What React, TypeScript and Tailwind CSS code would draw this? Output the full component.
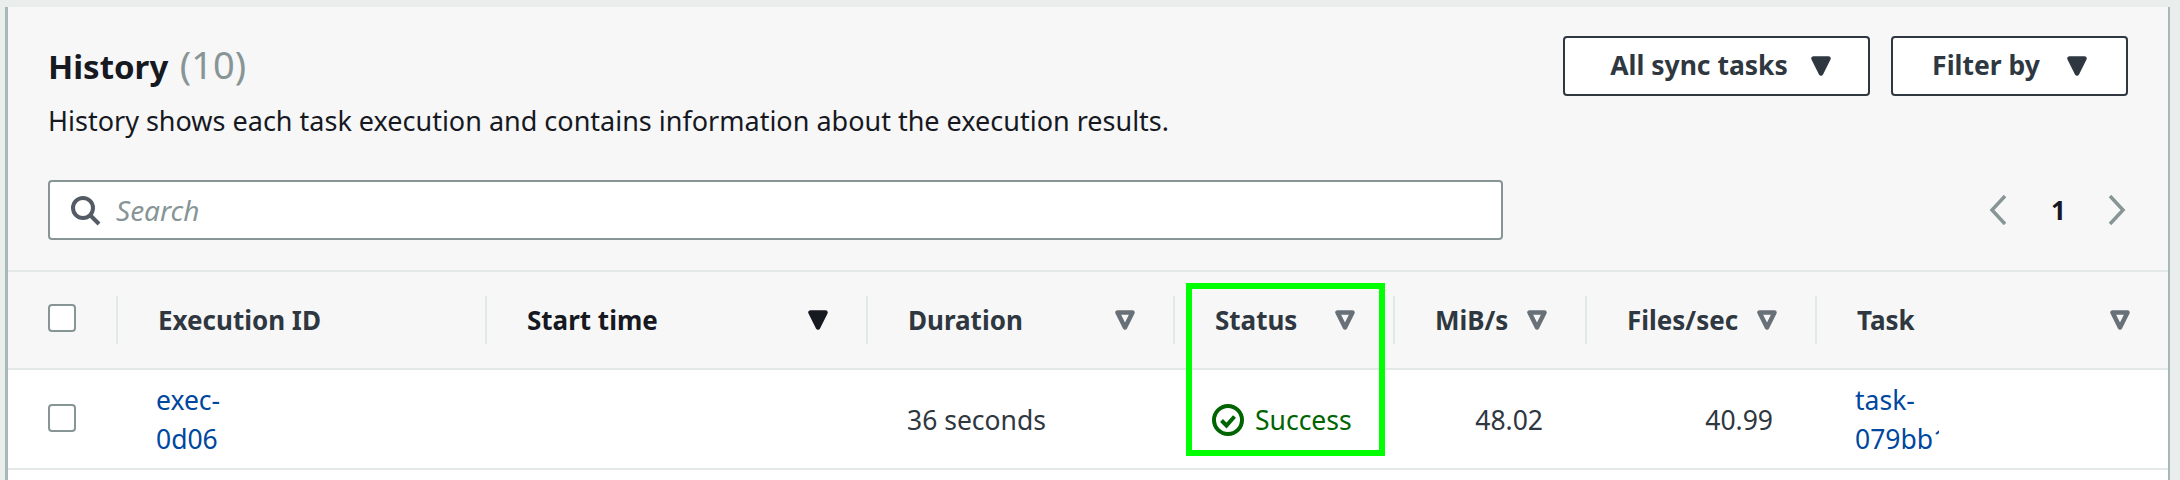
import React from 'react';

const columns = 'grid grid-cols-[108px_369px_381px_307px_220px_192px_230px_353px]';

function Caret({ filled = false, dark = false }: { filled?: boolean; dark?: boolean }) {
    return (
        <svg viewBox="0 0 20 22" className={`w-5 h-[22px] shrink-0 ${dark ? 'text-[#16191f]' : filled ? 'text-[#2f3740]' : 'text-[#687078]'}`}>
            <path
                d="M2.5 3.5h15L10 18.5z"
                fill={filled || dark ? 'currentColor' : 'none'}
                stroke="currentColor"
                strokeWidth="4.5"
                strokeLinejoin="round"
            />
        </svg>
    );
}

function Checkbox() {
    return <div className="w-7 h-7 rounded-[4px] border-2 border-[#879596] bg-white" />;
}

function HeaderCell({ label, sorted = false, plain = false }: { label: string; sorted?: boolean; plain?: boolean }) {
    return (
        <div className="flex items-center justify-between h-12 border-l-2 border-[#e3e8e8] pl-[40px] pr-[38px]">
            <span className={`text-[26px] leading-none font-bold whitespace-nowrap ${sorted ? 'text-[#16191f]' : 'text-[#2f3740]'}`}>{label}</span>
            {!plain && <Caret dark={sorted} />}
        </div>
    );
}

export default function App() {
    return (
        <div className="w-[2180px] h-[480px] overflow-hidden bg-[#e9edec] pt-[7px] pl-[5px] font-['Noto_Sans',sans-serif]">
            <div className="relative w-[2165px] h-[473px] border-l-[3px] border-r-2 border-[#aab7b8] bg-white">
                {/* Heading and search */}
                <div className="h-[263px] bg-[#f7f7f7] pl-10 pr-[40px] pt-[29px]">
                    <div className="flex justify-between">
                        <div>
                            <h2 className="text-[33px] leading-[46px] font-bold text-[#16191f] mt-[5px]">
                                History <span className="ml-[3px] text-[38px] font-normal text-[#879596]">(10)</span>
                            </h2>
                            <p className="text-[27px] leading-[36px] text-[#16191f] mt-[13px]">
                                History shows each task execution and contains information about the execution results.
                            </p>
                        </div>
                        <div className="flex gap-[21px]">
                            <button className="flex items-center justify-center gap-[23px] w-[307px] h-[60px] rounded-[4px] border-2 border-[#2f3740] bg-white pl-2 text-[26.5px] font-bold text-[#2f3740]">
                                All sync tasks
                                <Caret filled />
                            </button>
                            <button className="flex items-center justify-center gap-[27px] w-[237px] h-[60px] rounded-[4px] border-2 border-[#2f3740] bg-white text-[26.5px] font-bold text-[#2f3740]">
                                Filter by
                                <Caret filled />
                            </button>
                        </div>
                    </div>
                    <div className="flex items-center mt-[41px]">
                        <div className="flex items-center w-[1455px] h-[60px] rounded-[4px] border-2 border-[#879596] bg-white pl-[19px]">
                            <svg viewBox="0 0 32 32" className="w-8 h-8 text-[#545b64] fill-none stroke-current" strokeWidth="4">
                                <circle cx="14" cy="14" r="10" />
                                <path d="M21 21l9 9" />
                            </svg>
                            <span className="ml-[15px] text-[28px] italic text-[#879596]">Search</span>
                        </div>
                        <div className="flex items-center ml-[486px]">
                            <svg viewBox="0 0 18 30" className="w-[18px] h-[30px] fill-none stroke-[#879596]" strokeWidth="3.5">
                                <path d="M16 1L3 15l13 14" />
                            </svg>
                            <span className="ml-11 w-3 text-[26px] font-bold text-[#16191f]">1</span>
                            <svg viewBox="0 0 18 30" className="ml-[45px] w-[18px] h-[30px] fill-none stroke-[#879596]" strokeWidth="3.5">
                                <path d="M2 1l13 14L2 29" />
                            </svg>
                        </div>
                    </div>
                </div>

                {/* Table header */}
                <div className={`${columns} items-center h-[100px] bg-[#f7f7f7] border-y-2 border-[#e3e8e8]`}>
                    <div className="pl-10 mb-1"><Checkbox /></div>
                    <HeaderCell label="Execution ID" plain />
                    <HeaderCell label="Start time" sorted />
                    <HeaderCell label="Duration" />
                    <HeaderCell label="Status" />
                    <HeaderCell label="MiB/s" />
                    <HeaderCell label="Files/sec" />
                    <HeaderCell label="Task" />
                </div>

                {/* Table row */}
                <div className={`${columns} items-center h-[100px] pt-[2px] bg-white border-b-2 border-[#e3e8e8] text-[26.5px] leading-[39px] text-[#2f3740]`}>
                    <div className="pl-10 mb-1"><Checkbox /></div>
                    <a className="pl-10 text-[#00479f]">exec-<br />0d06</a>
                    <div />
                    <div className="pl-[41px]">36 seconds</div>
                    <div className="flex items-center gap-[11px] pl-[39px] text-[#006400]">
                        <svg viewBox="0 0 32 32" className="w-8 h-8 fill-none stroke-current" strokeWidth="4">
                            <circle cx="16" cy="16" r="14" />
                            <path d="M9.5 16.5l5 5 8-9" />
                        </svg>
                        Success
                    </div>
                    <div className="pr-[42px] text-right">48.02</div>
                    <div className="pr-[42px] text-right">40.99</div>
                    <a className="block ml-10 w-[84px] overflow-hidden whitespace-nowrap text-[#00479f]">task-<br />079bb1f2</a>
                </div>

                {/* Highlight drawn over the Status column */}
                <div className="absolute left-[1178px] top-[276px] w-[199px] h-[173px] border-[6px] border-[#00ff00]" />
            </div>
        </div>
    );
}
